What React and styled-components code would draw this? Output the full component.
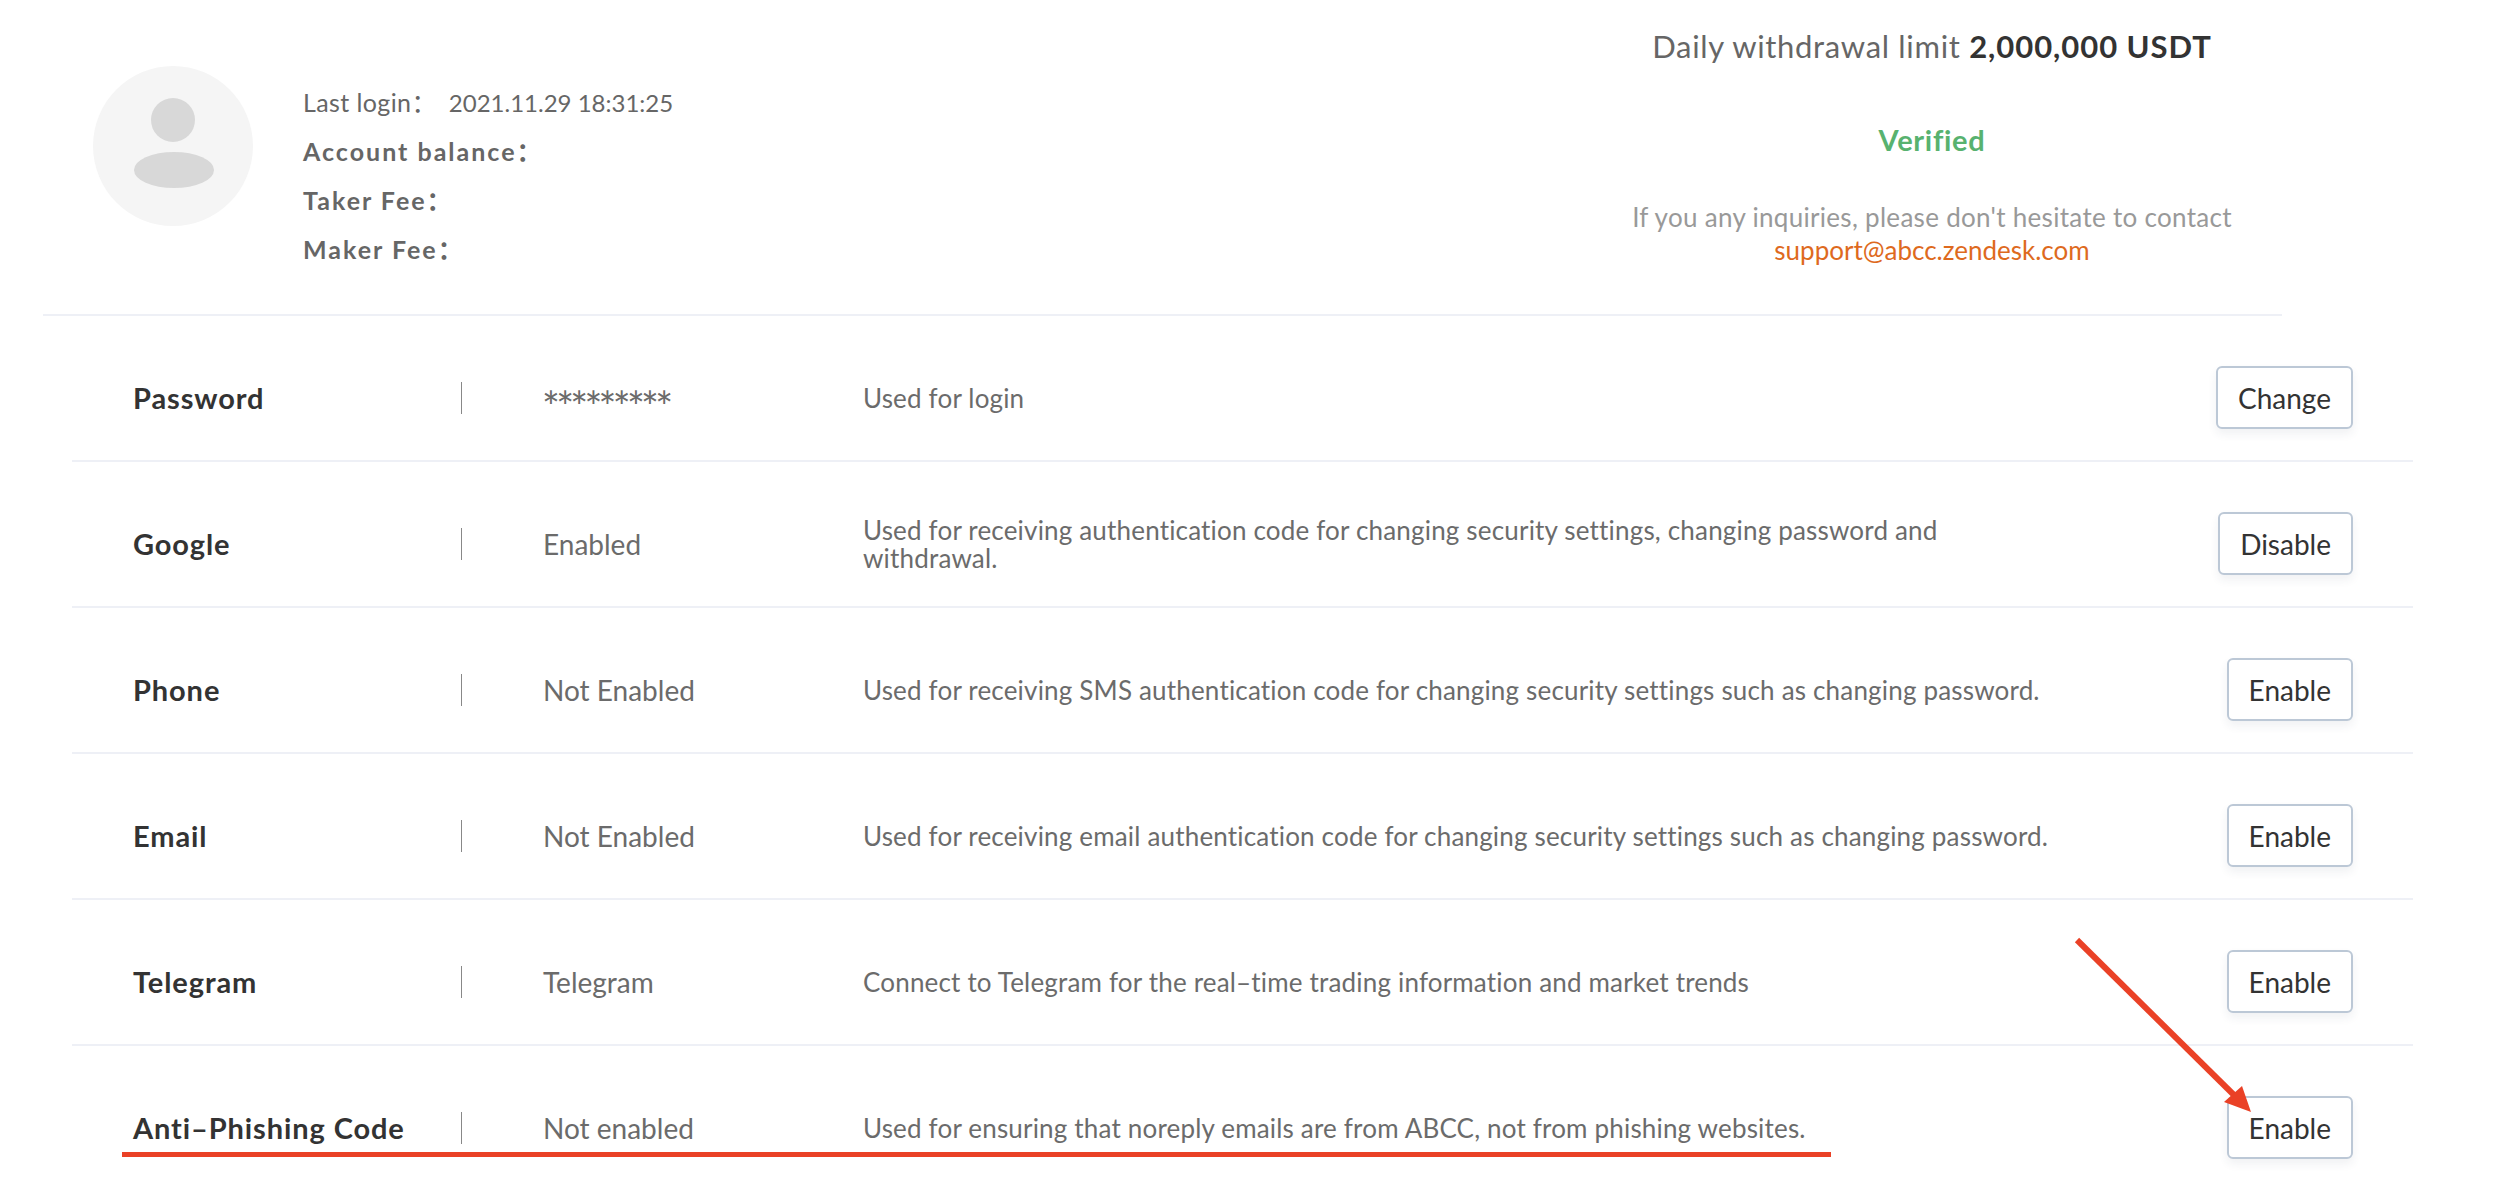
import React from 'react';
import styled, { createGlobalStyle } from 'styled-components';

const GlobalStyle = createGlobalStyle`
  html, body {
    margin: 0;
    padding: 0;
    height: 100%;
    overflow: hidden;
    background: #fff;
    font-family: Lato, "Noto Sans CJK SC", "Open Sans", sans-serif;
  }
`;

const Page = styled.div`
  position: relative;
  width: 2496px;
  height: 1178px;
  overflow: hidden;
`;

const Header = styled.header`
  display: flex;
  justify-content: space-between;
  box-sizing: border-box;
  width: 2239px;
  height: 316px;
  margin-left: 43px;
  padding-left: 50px;
  border-bottom: 2px solid #eef0f6;
`;

const Profile = styled.div`
  display: flex;
  padding-top: 66px;
`;

const Avatar = styled.svg`
  width: 160px;
  height: 160px;
  flex: none;
`;

const Info = styled.ul`
  list-style: none;
  margin: 12px 0 0 50px;
  padding: 0;
`;

const InfoLine = styled.li`
  height: 49px;
  line-height: 49px;
  font-size: 25px;
  font-weight: ${(p) => (p.$strong ? 700 : 400)};
  color: #666;
  letter-spacing: ${(p) => (p.$strong ? '2px' : '0.4px')};
`;

const Stamp = styled.span`
  margin-left: 12px;
  font-size: 24px;
  letter-spacing: 0;
`;

const Summary = styled.div`
  width: 700px;
  text-align: center;
`;

const Limit = styled.div`
  margin-top: 24px;
  line-height: 44px;
  font-size: 31px;
  color: #666;
  letter-spacing: 0.68px;
`;

const LimitValue = styled.strong`
  font-weight: 700;
  color: #333;
  letter-spacing: 0.95px;
`;

const Verified = styled.div`
  margin-top: 52px;
  line-height: 40px;
  font-size: 29px;
  font-weight: 700;
  letter-spacing: 0.7px;
  color: #58b26f;
`;

const Contact = styled.p`
  margin: 41px 0 0;
  font-size: 26px;
  line-height: 33px;
  color: #999;
  letter-spacing: 0.3px;
`;

const Mail = styled.a`
  display: block;
  color: #de6a1e;
  letter-spacing: 0;
`;

const Rows = styled.div`
  width: 2341px;
  margin-left: 72px;
`;

const Row = styled.div`
  display: flex;
  align-items: center;
  box-sizing: border-box;
  height: 146px;
  padding: 20px 60px 0 61px;
  border-bottom: 2px solid #eef0f6;
`;

const Name = styled.div`
  width: 329px;
  flex: none;
  box-sizing: border-box;
  font-size: 29px;
  font-weight: 700;
  color: #333;
  letter-spacing: 0.9px;
  line-height: 32px;
  border-right: 1px solid #888;
`;

const Value = styled.div`
  width: 401px;
  flex: none;
  box-sizing: border-box;
  padding-left: ${(p) => (p.$mask ? '80px' : '81px')};
  padding-top: ${(p) => (p.$mask ? '15px' : '0')};
  font-size: ${(p) => (p.$mask ? '42px' : '28px')};
  letter-spacing: ${(p) => (p.$mask ? '-3.7px' : '0')};
  color: #6b6b6b;
`;

const Description = styled.div`
  width: 1196px;
  flex: none;
  font-size: 26px;
  line-height: 28px;
  letter-spacing: 0.18px;
  color: #6b6b6b;
`;

const Action = styled.button`
  box-sizing: border-box;
  height: 63px;
  margin-left: auto;
  margin-bottom: 1px;
  padding: 0 20px;
  background: #fff;
  border: 2px solid #bcc8d6;
  border-radius: 6px;
  box-shadow: 0 5px 10px rgba(40, 60, 90, 0.07);
  font-family: inherit;
  font-size: 28px;
  color: #333;
`;

const Markup = styled.svg`
  position: absolute;
  top: 0;
  left: 0;
  pointer-events: none;
`;

const rows = [
  ['Password', '*********', 'Used for login', 'Change'],
  ['Google', 'Enabled', 'Used for receiving authentication code for changing security settings, changing password and withdrawal.', 'Disable'],
  ['Phone', 'Not Enabled', 'Used for receiving SMS authentication code for changing security settings such as changing password.', 'Enable'],
  ['Email', 'Not Enabled', 'Used for receiving email authentication code for changing security settings such as changing password.', 'Enable'],
  ['Telegram', 'Telegram', 'Connect to Telegram for the real–time trading information and market trends', 'Enable'],
  ['Anti–Phishing Code', 'Not enabled', 'Used for ensuring that noreply emails are from ABCC, not from phishing websites.', 'Enable'],
];

const App = () => (
  <Page>
    <GlobalStyle />
    <Header>
      <Profile>
        <Avatar viewBox="0 0 160 160">
          <circle cx="80" cy="80" r="80" fill="#f5f5f5" />
          <circle cx="80" cy="54" r="22" fill="#d8d8d8" />
          <ellipse cx="81" cy="104" rx="40" ry="18" fill="#d8d8d8" />
        </Avatar>
        <Info>
          <InfoLine>Last login：<Stamp>2021.11.29 18:31:25</Stamp></InfoLine>
          <InfoLine $strong>Account balance：</InfoLine>
          <InfoLine $strong>Taker Fee：</InfoLine>
          <InfoLine $strong>Maker Fee：</InfoLine>
        </Info>
      </Profile>
      <Summary>
        <Limit>Daily withdrawal limit <LimitValue>2,000,000 USDT</LimitValue></Limit>
        <Verified>Verified</Verified>
        <Contact>
          If you any inquiries, please don't hesitate to contact
          <Mail>support@abcc.zendesk.com</Mail>
        </Contact>
      </Summary>
    </Header>
    <Rows>
      {rows.map(([name, value, text, action]) => (
        <Row key={name}>
          <Name>{name}</Name>
          <Value $mask={value.startsWith('*')}>{value}</Value>
          <Description>{text}</Description>
          <Action type="button">{action}</Action>
        </Row>
      ))}
    </Rows>
    <Markup width="2496" height="1178" viewBox="0 0 2496 1178">
      <line x1="2077" y1="940" x2="2236" y2="1097" stroke="#ea4126" strokeWidth="6" />
      <polygon points="2251,1112 2224,1102 2242,1086" fill="#ea4126" />
      <rect x="122" y="1152" width="1709" height="5" fill="#ea4126" />
    </Markup>
  </Page>
);

export default App;
